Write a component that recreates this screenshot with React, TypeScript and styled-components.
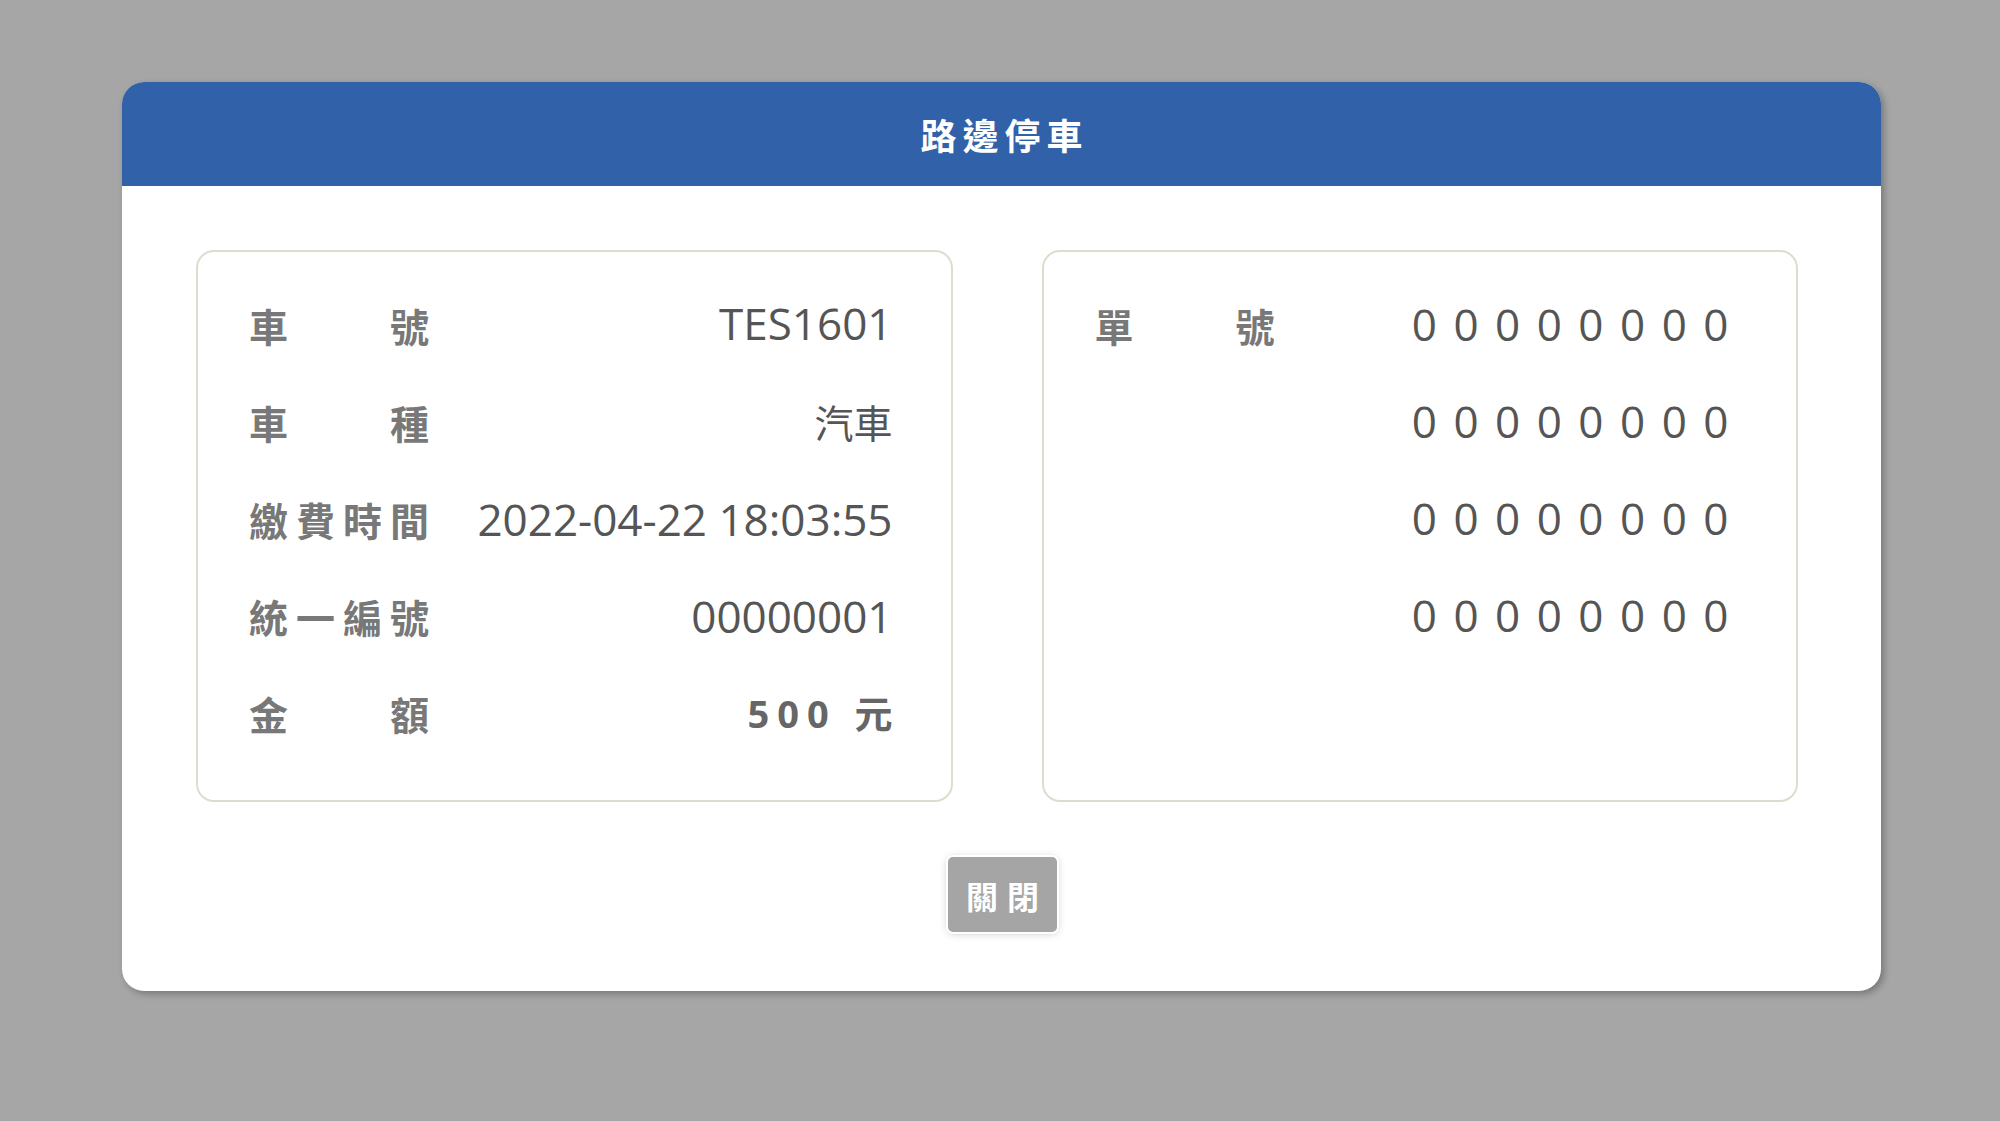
import React from "react";
import styled, { createGlobalStyle } from "styled-components";

const GlobalStyle = createGlobalStyle`
  html, body {
    margin: 0;
    padding: 0;
    background: #a6a6a6;
    font-family: "Open Sans", "Noto Sans CJK TC", sans-serif;
  }
  body {
    min-height: 1121px;
  }
`;

const Page = styled.div`
  display: flex;
  justify-content: flex-start;
  padding: 82px 0 0 122px;
`;

const Modal = styled.div`
  width: 1759px;
  background: #ffffff;
  border-radius: 22px;
  overflow: hidden;
  box-shadow: 3px 3px 7px rgba(0, 0, 0, 0.28);
  display: flex;
  flex-direction: column;
`;

const Header = styled.div`
  height: 104px;
  background: #3161a8;
  display: flex;
  align-items: center;
  justify-content: center;
`;

const Title = styled.h1`
  margin: 0;
  padding-left: 6px;
  color: #ffffff;
  font-family: "Noto Sans CJK TC", sans-serif;
  font-weight: 700;
  font-size: 36px;
  letter-spacing: 6px;
  line-height: 1;
`;

const Body = styled.div`
  padding: 64px 0 59px 0;
  display: flex;
  flex-direction: column;
  align-items: center;
  gap: 55px;
`;

const Cards = styled.div`
  width: 100%;
  box-sizing: border-box;
  padding: 0 83px 0 74px;
  display: grid;
  grid-template-columns: 1fr 1fr;
  gap: 89px;
`;

const Card = styled.div`
  height: 552px;
  box-sizing: border-box;
  border: 2px solid #e0dccd;
  border-radius: 18px;
  padding: 25px 58px 38px 51px;
  display: flex;
  flex-direction: column;
`;

const Row = styled.div`
  height: 97px;
  display: flex;
  align-items: center;
  justify-content: space-between;
`;

const Label = styled.div`
  width: 180px;
  display: flex;
  justify-content: space-between;
  font-family: "Noto Sans CJK TC", sans-serif;
  font-weight: 700;
  font-size: 39px;
  line-height: 1;
  color: #787878;
`;

const Value = styled.div<{ $cjk?: boolean; $bold?: boolean; $spaced?: boolean; $lift?: number }>`
  margin-left: auto;
  padding-bottom: ${(p) => p.$lift ?? 0}px;
  font-family: "Open Sans", "Noto Sans CJK TC", sans-serif;
  font-size: ${(p) => (p.$cjk ? "39px" : p.$bold ? "38px" : "44px")};
  font-weight: ${(p) => (p.$bold ? 700 : 400)};
  letter-spacing: ${(p) => (p.$spaced ? "16.5px" : p.$bold ? "8px" : "0")};
  margin-right: ${(p) => (p.$spaced ? "-7px" : p.$bold ? "-8px" : "0")};
  line-height: 1;
  color: ${(p) => (p.$bold ? "#666666" : "#555555")};
  white-space: nowrap;
`;

const CloseButton = styled.button`
  width: 109px;
  height: 75px;
  border: none;
  border-radius: 5px;
  background: #a5a5a5;
  color: #ffffff;
  font-family: "Noto Sans CJK TC", sans-serif;
  font-weight: 700;
  font-size: 32px;
  letter-spacing: 9px;
  padding: 0 0 0 9px;
  margin-left: 2px;
  line-height: 1;
  box-shadow: 0 0 0 2px #ffffff, 0 1px 8px rgba(0, 0, 0, 0.25);
  cursor: pointer;
`;

const LabelText = ({ text }: { text: string }) => (
  <Label>
    {text.split("").map((c, i) => (
      <span key={i}>{c}</span>
    ))}
  </Label>
);

const leftRows: { label: string; value: string; cjk?: boolean; bold?: boolean; lift?: number }[] = [
  { label: "車號", value: "TES1601", lift: 5 },
  { label: "車種", value: "汽車", cjk: true, lift: 0 },
  { label: "繳費時間", value: "2022-04-22 18:03:55", lift: 1 },
  { label: "統一編號", value: "00000001", lift: 1 },
  { label: "金額", value: "500 元", bold: true, lift: 1 },
];

const rightRows: { label?: string; value: string }[] = [
  { label: "單號", value: "00000000" },
  { value: "00000000" },
  { value: "00000000" },
  { value: "00000000" },
];

export default function App() {
  return (
    <>
      <GlobalStyle />
      <Page>
        <Modal>
          <Header>
            <Title>路邊停車</Title>
          </Header>
          <Body>
            <Cards>
              <Card>
                {leftRows.map((r) => (
                  <Row key={r.label}>
                    <LabelText text={r.label} />
                    <Value $cjk={r.cjk} $bold={r.bold} $lift={r.lift}>
                      {r.value}
                    </Value>
                  </Row>
                ))}
              </Card>
              <Card>
                {rightRows.map((r, i) => (
                  <Row key={i}>
                    {r.label ? <LabelText text={r.label} /> : null}
                    <Value $spaced $lift={3}>
                      {r.value}
                    </Value>
                  </Row>
                ))}
              </Card>
            </Cards>
            <CloseButton>關閉</CloseButton>
          </Body>
        </Modal>
      </Page>
    </>
  );
}
